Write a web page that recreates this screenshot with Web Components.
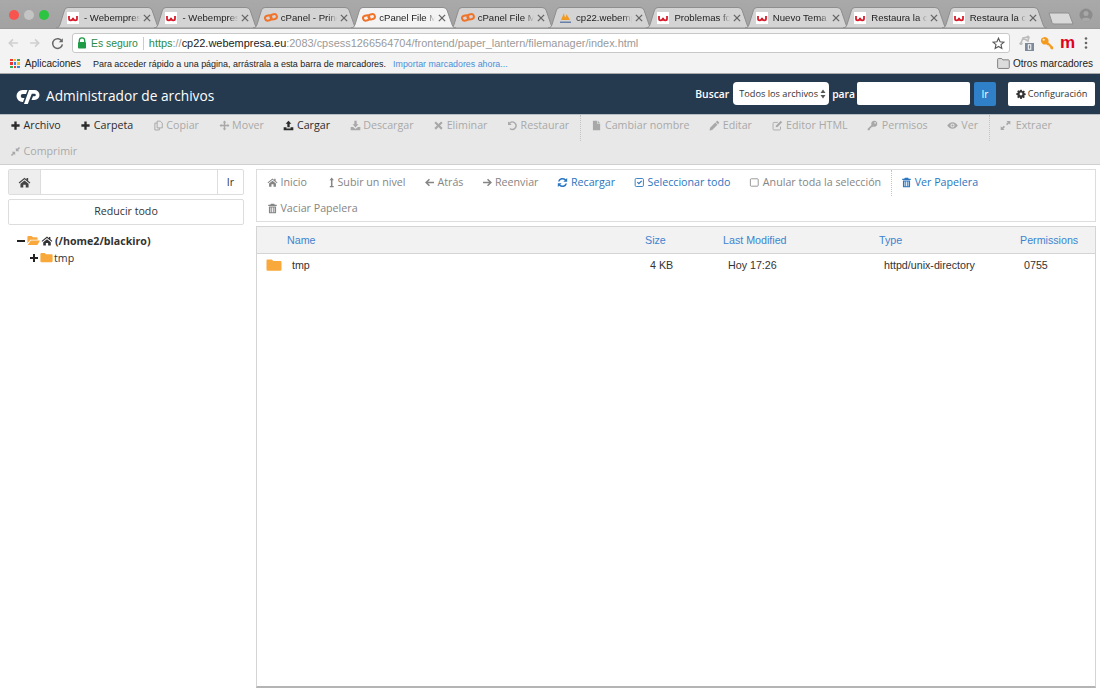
<!DOCTYPE html>
<html lang="es"><head><meta charset="utf-8"><title>Administrador de archivos</title>
<style>
html,body{margin:0;padding:0;width:1100px;height:688px;overflow:hidden;background:#fff;font-family:"Open Sans",sans-serif}
</style></head><body>
<browser-tabs>
  <browser-tab fav="w">- Webempresa</browser-tab>
  <browser-tab fav="w">- Webempresa</browser-tab>
  <browser-tab fav="cp">cPanel - Principal</browser-tab>
  <browser-tab fav="cp" active>cPanel File Manager</browser-tab>
  <browser-tab fav="cp">cPanel File Manager</browser-tab>
  <browser-tab fav="pma">cp22.webempresa.eu</browser-tab>
  <browser-tab fav="w">Problemas foro</browser-tab>
  <browser-tab fav="w">Nuevo Tema</browser-tab>
  <browser-tab fav="w">Restaura la copia</browser-tab>
  <browser-tab fav="w">Restaura la copia</browser-tab>
</browser-tabs>
<browser-toolbar></browser-toolbar>
<bookmarks-bar></bookmarks-bar>
<fm-header></fm-header>
<fm-toolbar>
  <tool-item icon="plus" on>Archivo</tool-item>
  <tool-item icon="plus" on>Carpeta</tool-item>
  <tool-item icon="copy">Copiar</tool-item>
  <tool-item icon="move">Mover</tool-item>
  <tool-item icon="upload" on>Cargar</tool-item>
  <tool-item icon="download">Descargar</tool-item>
  <tool-item icon="times">Eliminar</tool-item>
  <tool-item icon="undo">Restaurar</tool-item>
  <tool-sep></tool-sep>
  <tool-item icon="file">Cambiar nombre</tool-item>
  <tool-item icon="pencil">Editar</tool-item>
  <tool-item icon="edit" style="--g:3.5px">Editor HTML</tool-item>
  <tool-item icon="key" style="--g:3.5px">Permisos</tool-item>
  <tool-item icon="eye" style="--g:3px">Ver</tool-item>
  <tool-sep></tool-sep>
  <tool-item icon="expand" style="--g:4.500px">Extraer</tool-item>
  <tool-item icon="compress">Comprimir</tool-item>
</fm-toolbar>
<fm-main>
  <fm-sidebar slot="side"></fm-sidebar>
  <fm-nav slot="content">
    <tool-item icon="home">Inicio</tool-item>
    <tool-item icon="levelup" style="--g:.5px">Subir un nivel</tool-item>
    <tool-item icon="left" style="--g:2px">Atrás</tool-item>
    <tool-item icon="right" style="--g:1.500px">Reenviar</tool-item>
    <tool-item icon="refresh" link>Recargar</tool-item>
    <tool-item icon="checkbox" link>Seleccionar todo</tool-item>
    <tool-item icon="square">Anular toda la selección</tool-item>
    <tool-sep></tool-sep>
    <tool-item icon="trash" link>Ver Papelera</tool-item>
    <tool-break></tool-break>
    <tool-item icon="trash">Vaciar Papelera</tool-item>
  </fm-nav>
  <fm-table slot="content"></fm-table>
</fm-main>
<script>
const P={
plus:'<path d="M6.300 2h3.400v4.300H14v3.400H9.700V14H6.300V9.700H2V6.300h4.300z"/>',
home:'<path d="M8 2 .8 8l.9 1.100L8 3.900l6.300 5.200.9-1.100-2.700-2.300V2.600h-2v1.700z"/><path d="M3 9.600 8 5.500l5 4.100V14H9.500v-3.300h-3V14H3z"/>',
folder:'<path d="M.5 3.600A1.200 1.200 0 0 1 1.700 2.400h4.100l1.500 1.700h7a1.200 1.200 0 0 1 1.200 1.200v7.200a1.200 1.200 0 0 1-1.200 1.200H1.700A1.200 1.200 0 0 1 .5 12.500z"/>',
folderopen:'<path d="M.5 3.600A1.200 1.200 0 0 1 1.700 2.400h4.100l1.500 1.700h4.500a1.200 1.200 0 0 1 1.200 1.200V7H4.200L.5 11.600z"/><path d="M4.700 8H16l-3.200 5.600H.9z"/>',
copy:'<path fill="none" stroke="currentColor" stroke-width="1.400" d="M6 1.700h4.500L13.500 4.500v7H6zM6 4.500H2.700v10h6.500v-3"/>',
move:'<path d="M8 .8l2.600 2.700H9.100v3.400h3.400V5.400L15.200 8l-2.700 2.600V9.100H9.100v3.400h1.500L8 15.200l-2.600-2.700h1.500V9.100H3.500v1.500L.8 8l2.700-2.600v1.500h3.400V3.500H5.400z"/>',
upload:'<path d="M8 1l4.200 4.600H9.700v5H6.300v-5H3.800z"/><path d="M1 10.600h4v1.600h6v-1.600h4V15H1z"/>',
download:'<path d="M6.300 1h3.400v5h2.500L8 10.800 3.800 6h2.500z"/><path d="M1 10.200h3.500L8 13l3.500-2.800H15V15H1z"/>',
times:'<path d="M4.200 2 8 5.800 11.800 2 14 4.200 10.200 8 14 11.800 11.800 14 8 10.200 4.200 14 2 11.800 5.800 8 2 4.200z"/>',
undo:'<path d="M1.500 2v5.200h5.200L4.700 5.200A4.300 4.300 0 1 1 4.900 11.600l-1.300 1.500A6.300 6.300 0 1 0 3.300 3.800z"/>',
file:'<path d="M2.800 1H9v4.600h4.300V15H2.800z"/><path d="M10 1l3.200 3.600H10z"/>',
pencil:'<path d="M11.400 1.500a1 1 0 0 1 1.400 0l1.700 1.700a1 1 0 0 1 0 1.400l-1.400 1.400L10 2.900z"/><path d="M9.200 3.700l3.100 3.100-7.600 7.600-3.900.8.8-3.900z"/>',
edit:'<path fill="none" stroke="currentColor" stroke-width="1.300" d="M12.400 9.500V13a1.500 1.500 0 0 1-1.500 1.500H3A1.500 1.500 0 0 1 1.500 13V5A1.500 1.500 0 0 1 3 3.500h5.500"/><path d="M12.800 1.200l2 2L8 10l-2.600.6.6-2.600z"/>',
key:'<path fill-rule="evenodd" d="M10.600 1a4.400 4.400 0 1 1-1.900 8.400L7.600 10.500H6v1.600H4.400v1.600L3.200 15H1v-2.400l5.600-5.400A4.400 4.400 0 0 1 10.600 1zm1.200 2a1.200 1.200 0 1 0 0 2.400 1.200 1.200 0 0 0 0-2.400z"/>',
eye:'<path fill-rule="evenodd" d="M8 3.200C4.700 3.200 2 5.400.4 8 2 10.600 4.700 12.800 8 12.800s6-2.200 7.600-4.800C14 5.400 11.300 3.200 8 3.200zM8 5a3 3 0 1 1 0 6 3 3 0 0 1 0-6z"/><circle cx="8" cy="8" r="1.600"/>',
expand:'<path d="M9.500 1.500H15V7l-2-2-2.600 2.600-1.800-1.800L11.200 3.500z"/><path d="M6.500 14.500H1V9l2 2 2.600-2.600 1.800 1.800L4.800 12.500z"/>',
compress:'<path d="M8.500 7.500V2.600l1.600 1.600L13 1.300l1.700 1.700-2.900 2.900 1.600 1.600z"/><path d="M7.500 8.500v4.900l-1.600-1.600L3 14.700 1.300 13l2.900-2.900-1.600-1.600z"/>',
levelup:'<path d="M8.300 .8l3.200 3.800H9.400V13h1.800v2H5.500v-2h1.700V4.600H5.100z"/>',
left:'<path d="M7.200 2.400 1.500 8l5.700 5.600 1.500-1.500-3-3h8.800V6.900H5.700l3-3z"/>',
right:'<path d="M8.800 2.400 14.500 8l-5.700 5.600-1.500-1.500 3-3H1.500V6.900h8.800l-3-3z"/>',
refresh:'<path d="M14.800 1.500V7H9.300l2-2A4.600 4.600 0 0 0 3.600 6.600H1.400A6.800 6.800 0 0 1 12.900 3.400z"/><path d="M1.200 14.500V9h5.500l-2 2a4.600 4.600 0 0 0 7.700-1.600h2.200A6.800 6.800 0 0 1 3.100 12.600z"/>',
checkbox:'<rect x="1.700" y="2.200" width="12" height="11.600" rx="1.600" fill="none" stroke="currentColor" stroke-width="1.300"/><path d="M4.200 8l1.200-1.200 1.700 1.700 3.500-3.500 1.200 1.200-4.700 4.700z"/>',
square:'<rect x="2" y="2.600" width="11.400" height="10.800" rx="1.200" fill="none" stroke="currentColor" stroke-width="1.200"/>',
trash:'<path fill-rule="evenodd" d="M5.600 1h4.800l.8 1.600h3v1.600H1.800V2.600h3zM2.800 5h10.400v9a1 1 0 0 1-1 1H3.800a1 1 0 0 1-1-1zM5 6.500v7h1.200v-7zM7.400 6.500v7h1.200v-7zM9.800 6.500v7H11v-7z"/>',
cog:'<path fill-rule="evenodd" d="M6.800 1h2.400l.4 1.900 1.200.5 1.600-1 1.700 1.700-1 1.600.5 1.200 1.900.4v2.400l-1.900.4-.5 1.200 1 1.600-1.700 1.700-1.600-1-1.200.5-.4 1.900H6.800l-.4-1.900-1.200-.5-1.600 1-1.700-1.700 1-1.600-.5-1.200L.5 9.200V6.800l1.900-.4.5-1.200-1-1.600 1.700-1.700 1.600 1 1.200-.5zM8 5.700a2.300 2.300 0 1 0 0 4.600 2.300 2.300 0 0 0 0-4.600z"/>'
};
const svg=(n,s=12,extra='')=>`<svg width="${s}" height="${s}" viewBox="0 0 16 16" fill="currentColor" ${extra} aria-hidden="true">${P[n]}</svg>`;
const CP='<path d="M11.500 2H6.500A6 6 0 0 0 6.500 14H7L8.500 10H6.700A2 2 0 0 1 6.700 6H10z"/><path d="M13 2H18.500A5 5 0 0 1 18.500 12H15.500L17 8.300H18.500A1.300 1.300 0 0 0 18.500 5.700H15.800L11.800 16H8z"/>';
function def(tag,html,init){
  customElements.define(tag,class extends HTMLElement{
    constructor(){super();this.attachShadow({mode:'open'});}
    connectedCallback(){this.shadowRoot.innerHTML=typeof html==='function'?html(this):html;if(init)init(this);}
  });
}
const WF='<svg width="12" height="12" viewBox="0 0 12 12"><rect width="12" height="12" fill="#fff"/><path d="M2 4V6.800Q2 8.400 3.600 8.400 6 8.400 6 5.800 6 8.400 8.400 8.400 10 8.400 10 6.800V4" fill="none" stroke="#d81e2c" stroke-width="1.800"/></svg>';
const CF='<svg width="14" height="9" viewBox="0 0 14 9" fill="none" stroke="#f0732a" stroke-width="2"><rect x="1" y="2.600" width="6.500" height="5" rx="2.500" transform="rotate(-14 4 5)"/><rect x="6.500" y="1.200" width="6.500" height="5" rx="2.500" transform="rotate(-14 10 4)"/></svg>';
const PF='<svg width="13" height="12" viewBox="0 0 13 12"><path d="M2 8 5 1l1 7zM6.500 8 7.500 2 11 8zM4 8l2-4 2 4z" fill="#f29a1f"/><path d="M1 9.500h11v1.500H1z" fill="#6a7fa8"/></svg>';

def('browser-tabs',`<style>
:host{display:flex;height:28px;background:linear-gradient(#a9a9a9,#a2a2a2);position:relative;overflow:hidden}
.lights{flex:none;width:56px;display:flex;gap:5px;padding:9.500px 0 0 9px;box-sizing:border-box}
.lights i{flex:none;width:10px;height:10px;border-radius:50%;display:block}
.tabs{display:flex;align-items:flex-end}
.new{flex:none;width:26px;height:13px;margin:12px 0 0 8px}
.me{margin:8px 0 0 auto;padding-right:7px;color:#8a8a8a}
</style>
<div class="lights"><i style="background:#f8544f"></i><i style="background:#c4c4c4"></i><i style="background:#2cc441"></i></div>
<div class="tabs"><slot></slot></div>
<svg class="new" viewBox="0 0 26 13"><path d="M1 1H19.500Q21 1 21.500 2.500L25 12H6Q4.600 12 4 10.500z" fill="#d9d9d9" stroke="#8f8f8f"/></svg>
<svg class="me" width="14" height="14" viewBox="0 0 14 14"><circle cx="7" cy="7" r="6.500" fill="#8c8c8c"/><circle cx="7" cy="5.500" r="2.500" fill="#a8a8a8"/><path d="M2.500 11.500c1-2.500 8-2.500 9 0a6 6 0 0 1-9 0z" fill="#a8a8a8"/></svg>`);

def('browser-tab',h=>{
 const a=h.hasAttribute('active');
 const f={w:WF,cp:CF,pma:PF}[h.getAttribute('fav')];
 return `<style>
:host{display:block;flex:none;width:105px;height:21px;margin-right:-6.600px;position:relative;font:9.600px "Liberation Sans",sans-serif;color:#222;z-index:${a?2:1}}
svg.bg{position:absolute;inset:0;width:100%;height:100%}
.in{position:relative;display:flex;align-items:center;height:100%;padding-left:11px;box-sizing:border-box}
.fav{flex:none;width:15px;display:flex;margin-right:2px}
.t{flex:none;width:56px;white-space:nowrap;overflow:hidden;-webkit-mask-image:linear-gradient(90deg,#000 84%,transparent 100%);mask-image:linear-gradient(90deg,#000 84%,transparent 100%)}
.x{position:absolute;left:87px;top:6.500px;width:8px;height:8px}
</style>
<svg class="bg" viewBox="0 0 105 21" preserveAspectRatio="none"><path d="M0 21C3 21 3.500 19 4.500 16L8.500 3Q9.500 .5 12 .5H92Q95 .5 96 3L100.500 16C101.500 19 102 21 105 21z" fill="${a?'#f3f3f3':'#d4d4d4'}" stroke="#8e8e8e" stroke-width="1"/></svg>
<div class="in"><span class="fav">${f}</span><span class="t"><slot></slot></span></div>
<svg class="x" viewBox="0 0 9 9"><path d="M1 1l7 7M8 1L1 8" stroke="#666" stroke-width="1.500"/></svg>`;
});

def('browser-toolbar',`<style>
:host{display:flex;align-items:center;height:26px;background:#f3f3f3;box-sizing:border-box;padding-top:3px;border-top:1px solid #9a9a9a;font:11px "Liberation Sans",sans-serif}
.nav{flex:none;width:72px;display:flex;align-items:center;padding-left:7px;box-sizing:border-box;gap:10px}
.box{flex:none;width:938px;height:20px;background:#fff;border:1px solid #c8c8c8;border-radius:3px;box-sizing:border-box;display:flex;align-items:center;white-space:nowrap;padding-left:4px;color:#9a9a9a;font-size:10.950px;margin-left:0}
.sec{color:#2a8a47;display:flex;align-items:center;gap:4px;font-size:10.400px}
.bar{width:1px;height:13px;background:#ccc;margin:0 5px 0 5px}
.gr{color:#2a8a47}.blk{color:#222}
.star{margin-left:auto;margin-right:4px;color:#555}
.ext{flex:1;display:flex;align-items:center;position:relative}
</style>
<div class="nav"><svg width="12" height="12" viewBox="0 0 16 16" fill="#cfcfcf">${P.left}</svg><svg width="12" height="12" viewBox="0 0 16 16" fill="#cfcfcf">${P.right}</svg>
<svg width="13" height="13" viewBox="0 0 16 16" fill="none" stroke="#6a6a6a" stroke-width="1.900"><path d="M13.500 5.500A6 6 0 1 0 14 9"/><path d="M14.500 1.500v5h-5z" fill="#6a6a6a" stroke="none"/></svg></div>
<div class="box"><span class="sec"><svg width="10" height="12" viewBox="0 0 10 12"><path d="M2.300 5V3.500a2.700 2.700 0 0 1 5.400 0V5" fill="none" stroke="#1f9a45" stroke-width="1.300"/><rect x="1" y="5" width="8" height="6.500" rx=".8" fill="#1f9a45"/></svg>Es seguro</span><i class="bar"></i><span><span class="gr">https</span>://<span class="blk">cp22.webempresa.eu</span>:2083/cpsess1266564704/frontend/paper_lantern/filemanager/index.html</span>
<svg class="star" width="13" height="13" viewBox="0 0 14 14" fill="none" stroke="#555" stroke-width="1.200"><path d="M7 1.300 8.700 5.100 12.800 5.500 9.700 8.200 10.600 12.300 7 10.200 3.400 12.300 4.300 8.200 1.200 5.500 5.300 5.100z"/></svg></div>
<div class="ext">
<svg style="margin-left:8px" width="18" height="18" viewBox="0 0 18 18"><path d="M3 9l2-5 5-1M5 4l5 3 1-4" fill="none" stroke="#bdbdbd" stroke-width="1.500"/><circle cx="3" cy="9.500" r="1.600" fill="#bdbdbd"/><circle cx="10" cy="3" r="1.600" fill="#bdbdbd"/><rect x="7" y="9" width="9" height="8" fill="#7e8a99"/><rect x="10.300" y="10.800" width="2.500" height="4.400" fill="none" stroke="#fff"/></svg>
<svg style="margin-left:4px;color:#f59a1c;transform:scaleX(-1)" width="14" height="14" viewBox="0 0 16 16" fill="#f59a1c">${P.key}</svg>
<span style="margin-left:6px;color:#e3001b;font:700 17px 'Liberation Sans',sans-serif;line-height:14px">m</span>
<svg style="margin-left:9px" width="4" height="12" viewBox="0 0 4 12" fill="#666"><circle cx="2" cy="1.500" r="1.300"/><circle cx="2" cy="6" r="1.300"/><circle cx="2" cy="10.500" r="1.300"/></svg>
</div>`);

def('bookmarks-bar',`<style>
:host{display:flex;align-items:center;height:20px;background:#f3f3f3;box-sizing:border-box;padding-left:10px;font:8.970px "Liberation Sans",sans-serif;color:#222;border-bottom:1px solid #aaa;white-space:nowrap}
.apps{display:grid;grid-template-columns:repeat(3,2.600px);gap:1px;margin-right:5px}
.apps i{display:block;height:2.600px}
.a{font-size:10px;margin-right:12px}
.imp{color:#4c8fd9;margin-left:7px;font-size:8.850px}
.ot{margin-left:auto;display:flex;align-items:center;gap:3px;font-size:10px;padding-right:7px}
</style>
<span class="apps"><i style="background:#e33"></i><i style="background:#fb2"></i><i style="background:#3a5"></i><i style="background:#e33"></i><i style="background:#38d"></i><i style="background:#fb2"></i><i style="background:#3a5"></i><i style="background:#e33"></i><i style="background:#38d"></i></span>
<span class="a">Aplicaciones</span><span>Para acceder rápido a una página, arrástrala a esta barra de marcadores.</span><span class="imp">Importar marcadores ahora...</span>
<span class="ot"><svg width="13" height="11" viewBox="0 0 14 12"><path d="M.6 1.500A1 1 0 0 1 1.600.6h3.500l1.200 1.400h6a1 1 0 0 1 1 1v7.400a1 1 0 0 1-1 1H1.600a1 1 0 0 1-1-1z" fill="#dcdcdc" stroke="#777"/></svg>Otros marcadores</span>`);

def('fm-header',`<style>
:host{display:flex;align-items:center;height:41px;background:#253a4e;box-sizing:border-box;border-bottom:1px solid #b8bec4;color:#fff;padding:0 5px 1px 16px;font:11px "Open Sans",sans-serif}
.logo{margin:5px 6px 0 0;flex:none}
h1{font:400 13.700px "Open Sans",sans-serif;margin:3px 0 0;flex:1;white-space:nowrap}
b{font-weight:600;font-size:10.300px}
.sel{width:96px;height:23px;margin:0 3px 0 4px;background:#fff;border-radius:4px;color:#333;display:flex;align-items:center;justify-content:space-between;padding:0 3px 0 6px;box-sizing:border-box;font-size:9.200px;white-space:nowrap}
.inp{width:113px;height:23px;background:#fff;border-radius:2px;margin:0 4px 0 2px;box-sizing:border-box}
.ir{width:22px;height:24px;background:#2f80c8;display:flex;align-items:center;justify-content:center;border-radius:2px;font-size:10px;margin-right:12px}
.cfg{width:87px;height:24px;background:#fff;border-radius:2px;color:#333;display:flex;align-items:center;justify-content:center;gap:2px;font-size:9.200px}
</style>
<svg class="logo" width="24" height="16" viewBox="0 0 24 16" fill="#fff">${CP}</svg><h1>Administrador de archivos</h1>
<b>Buscar</b><div class="sel"><span>Todos los archivos</span><svg width="6" height="10" viewBox="0 0 6 10" fill="#555"><path d="M3 .5 5.500 4H.5zM3 9.500.5 6h5z"/></svg></div><b>para</b><div class="inp"></div><div class="ir">Ir</div><div class="cfg">${svg('cog',10)}<span>Configuración</span></div>`);

def('fm-toolbar',`<style>
:host{display:flex;flex-wrap:wrap;height:50px;box-sizing:border-box;background:#e8e8e8;border-bottom:1px solid #cfcfcf;padding:0 0 0 10px;column-gap:19.600px;align-content:flex-start;align-items:flex-start;font:10.700px "Open Sans",sans-serif;--off:#a8a8a8;--on:#2b2b2b;--sep:-9px}
::slotted(tool-item){height:20px}
::slotted(tool-sep){height:26px}
</style><slot></slot>`);

def('tool-item',h=>{
 const c=h.hasAttribute('on')?'var(--on)':h.hasAttribute('link')?'var(--link)':'var(--off)';
 return `<style>:host{display:inline-flex;align-items:center;gap:var(--g,2.500px);color:${c};white-space:nowrap}svg{flex:none}</style>${svg(h.getAttribute('icon'),11)}<span><slot></slot></span>`;
});
def('tool-sep',`<style>:host{display:block;width:0;border-left:1px dotted #c4c4c4;margin:0 var(--sep)}</style>`);
def('tool-break',`<style>:host{display:block;flex:0 0 100%;height:0}</style>`);

def('fm-main',`<style>
:host{display:flex;height:523px;box-sizing:border-box;padding:4px 4px 0 8px;gap:12px}
.s{flex:none;width:236px}.c{flex:1;display:flex;flex-direction:column;gap:4px;min-width:0}
</style><div class="s"><slot name="side"></slot></div><div class="c"><slot name="content"></slot></div>`);

def('fm-sidebar',`<style>
:host{display:block;font:10.650px "Open Sans",sans-serif;color:#333}
.path{display:flex;height:26px;border:1px solid #ddd;border-radius:2px;box-sizing:border-box}
.home{width:31px;background:#eee;border-right:1px solid #ddd;display:flex;align-items:center;justify-content:center;color:#444}
.f{flex:1}.ir{width:26px;border-left:1px solid #ddd;display:flex;align-items:center;justify-content:center;padding-bottom:1px;box-sizing:border-box}
.btn{height:26px;margin-top:4px;border:1px solid #ddd;border-radius:2px;box-sizing:border-box;display:flex;align-items:center;justify-content:center;padding-bottom:2px}
ul{list-style:none;margin:7px 0 0;padding:0}
li{display:flex;align-items:center;height:17px;gap:2px}
.r{padding-left:9px;font-weight:700}.k{padding-left:22px}
.or{color:#f9a83c;display:flex}
</style>
<div class="path"><div class="home">${svg('home',13)}</div><div class="f"></div><div class="ir">Ir</div></div>
<div class="btn">Reducir todo</div>
<ul><li class="r"><svg width="8" height="8" viewBox="0 0 8 8" fill="#222"><path d="M0 3h8v2H0z"/></svg><span class="or">${svg('folderopen',13)}</span><span style="display:flex;color:#333;margin-left:-1px">${svg('home',12)}</span><span>(/home2/blackiro)</span></li>
<li class="k"><svg width="8" height="8" viewBox="0 0 8 8" fill="#222"><path d="M3 0h2v3h3v2H5v3H3V5H0V3h3z"/></svg><span class="or">${svg('folder',13)}</span><span style="margin-left:-1px">tmp</span></li></ul>`);

def('fm-nav',`<style>
:host{display:flex;flex-wrap:wrap;align-content:flex-start;align-items:flex-start;height:53px;box-sizing:border-box;border:1px solid #ddd;padding:0 0 0 10px;column-gap:19px;font:10.700px "Open Sans",sans-serif;--off:#858585;--link:#2a76c0;--sep:-9.500px}
::slotted(tool-item){height:24px}
::slotted(tool-sep){height:26px}
</style><slot></slot>`);

def('fm-table',`<style>
:host{display:block;flex:1;border:1px solid #d4d4d4;border-bottom:2px solid #b4b4b4;font:10.700px "Liberation Sans",sans-serif;color:#333;box-sizing:border-box}
.g{display:grid;grid-template-columns:383px 78px 156px 141px 1fr}
.h{background:#f2f2f2;border-bottom:1px solid #d4d4d4;height:27px;align-items:center;color:#3d84d0;box-sizing:border-box}
.h span{padding-left:5px}.h span:first-child{padding-left:30px}
.r{height:22px;align-items:center}
.r span{padding-left:10px}
.r span:last-child{padding-left:9px}
.r span.n{padding-left:9px;display:flex;align-items:center;gap:10px}
.n i{color:#f9a83c;display:flex}
</style>
<div class="g h"><span>Name</span><span>Size</span><span>Last Modified</span><span>Type</span><span>Permissions</span></div>
<div class="g r"><span class="n"><i>${svg('folder',16)}</i>tmp</span><span>4 KB</span><span>Hoy 17:26</span><span>httpd/unix-directory</span><span>0755</span></div>`);
</script>
</body></html>
